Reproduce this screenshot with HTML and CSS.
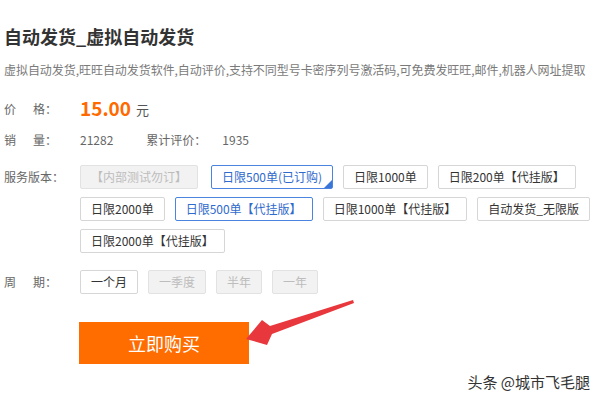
FILE: index.html
```html
<!DOCTYPE html>
<html lang="zh-CN">
<head>
<meta charset="utf-8">
<title>自动发货_虚拟自动发货</title>
<link rel="stylesheet" href="styles.css">
</head>
<body>
<div class="page">
  <h1 class="title">自动发货_虚拟自动发货</h1>
  <p class="desc">虚拟自动发货,旺旺自动发货软件,自动评价,支持不同型号卡密序列号激活码,可免费发旺旺,邮件,机器人网址提取</p>

  <div class="row price-row">
    <span class="lab"><span class="c1">价</span><span>格：</span></span>
    <span class="price">15.00</span><span class="unit">元</span>
  </div>

  <div class="row sales-row">
    <span class="lab"><span class="c1">销</span><span>量：</span></span>
    <span class="num">21282</span>
    <span class="rev">累计评价：</span>
    <span class="num">1935</span>
  </div>

  <div class="opt-row svc">
    <span class="lab">服务版本：</span>
    <div class="opts">
      <span class="opt dis">【内部测试勿订】</span>
      <span class="opt sel mark">日限500单(已订购)</span>
      <span class="opt">日限1000单</span>
      <span class="opt">日限200单【代挂版】</span>
      <span class="opt">日限2000单</span>
      <span class="opt sel">日限500单【代挂版】</span>
      <span class="opt">日限1000单【代挂版】</span>
      <span class="opt">自动发货_无限版</span>
      <span class="opt">日限2000单【代挂版】</span>
    </div>
  </div>

  <div class="opt-row period">
    <span class="lab"><span class="c1">周</span><span>期：</span></span>
    <div class="opts">
      <span class="opt">一个月</span>
      <span class="opt dis">一季度</span>
      <span class="opt dis">半年</span>
      <span class="opt dis">一年</span>
    </div>
  </div>

  <div class="buy-row">
    <button class="buy">立即购买</button>
  </div>

  <svg class="arrow" width="600" height="400" viewBox="0 0 600 400">
    <polygon points="353,300 270,326 262,320 246,339 267,345 272,334 354,303" fill="#e8383d"/>
  </svg>

  <div class="wm">头条 @城市飞毛腿</div>
</div>
</body>
</html>
```

FILE: styles.css
```css
html, body {
  margin: 0;
  padding: 0;
  background: #fff;
}
body {
  font-family: "Noto Sans CJK SC", "Noto Sans", sans-serif;
  color: #666;
  font-size: 12px;
}
.page {
  position: relative;
  width: 600px;
  height: 400px;
  box-sizing: border-box;
  padding: 24px 4px 0;
  overflow: hidden;
}
.title {
  margin: 0;
  font-size: 18px;
  line-height: 24px;
  font-weight: bold;
  color: #333;
}
.desc {
  margin: 14px 0 0;
  font-size: 12px;
  line-height: 16px;
  color: #7a7a7a;
  white-space: nowrap;
  letter-spacing: -0.05px;
}
.row {
  display: flex;
  align-items: center;
}
.lab {
  width: 76px;
  flex: none;
  display: inline-flex;
  color: #666;
  font-size: 12px;
}
.lab .c1 {
  margin-right: 17px;
}
.price-row {
  margin-top: 18px;
  height: 24px;
}
.price {
  color: #ff6a00;
  font-size: 19px;
  font-weight: bold;
  line-height: 24px;
}
.unit {
  margin-left: 5px;
  font-size: 13px;
  color: #555;
  padding-top: 3px;
}
.sales-row {
  margin-top: 9px;
  height: 20px;
}
.num {
  color: #666;
}
.rev {
  margin-left: 33px;
  width: 76px;
}
.opt-row {
  display: flex;
  align-items: flex-start;
}
.opt-row .lab {
  line-height: 24px;
}
.svc {
  margin-top: 16px;
}
.period {
  margin-top: 17px;
}
.opts {
  display: flex;
  flex-wrap: wrap;
  gap: 8px 10px;
  width: 520px;
}
.opt {
  position: relative;
  box-sizing: border-box;
  height: 24px;
  line-height: 22px;
  padding: 0 10px;
  border: 1px solid #d6d6d6;
  border-radius: 2px;
  color: #333;
  background: #fff;
  white-space: nowrap;
}
.opt.dis {
  background: #f2f2f2;
  border-color: #e2e2e2;
  color: #bdbdbd;
}
.opt.sel {
  border-color: #4a84e0;
  color: #2f6acd;
}
.opt.mark {
  margin-left: 3px;
}
.opt.mark::after {
  content: "";
  position: absolute;
  right: 0;
  bottom: 0;
  width: 0;
  height: 0;
  border-style: solid;
  border-width: 0 0 8px 8px;
  border-color: transparent transparent #3a76d8 transparent;
}
.buy-row {
  margin-top: 28px;
  padding-left: 75px;
}
.buy {
  width: 170px;
  height: 42px;
  border: none;
  border-radius: 0;
  background: #ff6c00;
  color: #fff;
  font-family: "Noto Sans CJK SC", sans-serif;
  font-size: 18px;
  cursor: pointer;
  padding: 0;
}
.arrow {
  position: absolute;
  left: 0;
  top: 0;
  pointer-events: none;
}
.wm {
  position: absolute;
  right: 10px;
  bottom: 9px;
  font-size: 15px;
  line-height: 18px;
  color: #333;
  text-shadow: 1px 1px 0 #fff, -1px -1px 0 #fff;
}
```
